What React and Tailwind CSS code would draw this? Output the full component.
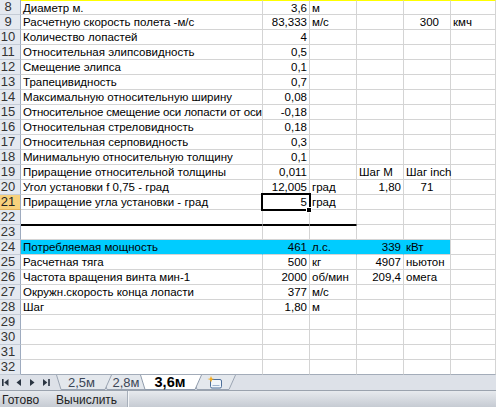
import React from "react";

const rows = [
  { n: 8, a: "Диаметр м.", b: "3,6", c: "м", top: true },
  { n: 9, a: "Расчетную скорость полета -м/с", b: "83,333", c: "м/с", e: "300", eAlign: "rp", f: "кмч" },
  { n: 10, a: "Количество лопастей", b: "4" },
  { n: 11, a: "Относительная элипсовидность", b: "0,5" },
  { n: 12, a: "Смещение элипса", b: "0,1" },
  { n: 13, a: "Трапецивидность", b: "0,7" },
  { n: 14, a: "Максимальную относительную ширину", b: "0,08" },
  { n: 15, a: "Относительное смещение оси лопасти от оси", b: "-0,18", tight: true },
  { n: 16, a: "Относительная стреловидность", b: "0,18" },
  { n: 17, a: "Относительная серповидность", b: "0,3" },
  { n: 18, a: "Минимальную относительную толщину", b: "0,1" },
  { n: 19, a: "Приращение относительной толщины", b: "0,011", d: "Шаг М", dAlign: "l", e: "Шаг inch", eAlign: "l", eOv: true },
  { n: 20, a: "Угол установки f 0,75 - град", b: "12,005", c: "град", d: "1,80", e: "71", eAlign: "c" },
  { n: 21, a: "Приращение угла установки - град", b: "5", c: "град", active: true },
  { n: 22, blackBottom: true },
  { n: 23, blackTop: true },
  { n: 24, a: "Потребляемая мощность", b: "461", c: "л.с.", d: "339", e: "кВт", eAlign: "l", cyan: true },
  { n: 25, a: "Расчетная тяга", b: "500", c: "кг", d: "4907", e: "ньютон", eAlign: "l" },
  { n: 26, a: "Частота вращения винта мин-1", b: "2000", c: "об/мин", d: "209,4", e: "омега", eAlign: "l" },
  { n: 27, a: "Окружн.скорость конца лопасти", b: "377", c: "м/с" },
  { n: 28, a: "Шаг", b: "1,80", c: "м" },
  { n: 29 },
  { n: 30 },
  { n: 31 },
  { n: 32, last: true },
];

function alignCls(al) {
  if (al === "r") return "justify-end pr-[2px]";
  if (al === "rp") return "justify-end pr-[11px]";
  if (al === "c") return "justify-center";
  return "justify-start pl-[2px]";
}

function Cell({ w, text, al, row, cyan, black, last, children, active, ov, tight }) {
  const cls = [
    "h-full box-border border-r border-b border-[#d4d4d4] whitespace-nowrap leading-[14px] flex items-center",
    active ? "relative" : ov ? "overflow-visible" : "overflow-hidden",
    w,
    alignCls(al),
    tight ? "tracking-[-0.15px]" : "",
    row.top ? "border-t border-t-[#ffff00]" : "",
    cyan ? "bg-[#00ccff]" : "",
    cyan === "mid" ? "border-r-[#00ccff]" : "",
    black && row.blackBottom ? "border-b-black" : "",
    black && row.blackTop ? "border-t border-t-black" : "",
    last ? "border-b-[#a3acb9]" : "",
  ].join(" ");
  return (
    <div className={cls}>
      {text}
      {children}
    </div>
  );
}

function Row({ row }) {
  const cy = row.cyan;
  return (
    <div className="flex h-[15px]">
      <div
        className={
          "h-full w-[21px] shrink-0 box-border border-r border-r-[#9eabbf] border-b flex items-center justify-center pr-[4px] text-[13px] leading-[14px] " +
          (row.active ? "bg-[#f7d17c] border-b-[#e3b35a] text-[#222]" : "bg-[#e4e9f0] border-b-[#c5ccd6] text-[#333]") +
          (row.last ? " border-b-[#a3acb9]" : "")
        }
      >
        {row.n}
      </div>
      <Cell w="w-[242px] shrink-0" text={row.a} al="l" row={row} cyan={cy ? "mid" : false} black last={row.last} tight={row.tight} />
      <Cell w="w-[47px] shrink-0" text={row.active ? null : row.b} al="r" row={row} cyan={cy ? "mid" : false} black last={row.last} active={row.active}>
        {row.active && (
          <>
            <span>{row.b}</span>
            <div className="absolute left-[-2px] top-[-2px] w-[50px] h-[18px] border-2 border-black z-10"></div>
            <div className="absolute left-[43px] top-[12px] w-[6px] h-[6px] bg-black border border-white z-20"></div>
          </>
        )}
      </Cell>
      <Cell w="w-[47px] shrink-0" text={row.c} al="l" row={row} cyan={cy ? "mid" : false} black last={row.last} />
      <Cell w="w-[47px] shrink-0" text={row.d} al={row.dAlign || "r"} row={row} cyan={cy ? "mid" : false} last={row.last} />
      <Cell w="w-[47px] shrink-0" text={row.e} al={row.eAlign || "l"} row={row} cyan={cy ? "end" : false} last={row.last} ov={row.eOv} />
      <Cell w="flex-1 min-w-0" text={row.f} al="l" row={row} last={row.last} />
    </div>
  );
}

function TabShape({ w, active }) {
  const fill = active ? "#ffffff" : "#e4e8ed";
  const stroke = active ? "#8e9aab" : "#9aa4b2";
  return (
    <svg className="absolute inset-0" width={w} height="15" viewBox={`0 0 ${w} 15`}>
      <polygon points={`0,0 ${w},0 ${w - 7},14.5 5,14.5`} fill={fill} />
      <polyline points={`0.5,0 5,14.5 ${w - 7},14.5 ${w - 0.5},0`} fill="none" stroke={stroke} strokeWidth="1" />
    </svg>
  );
}

function Tab({ w, z, ml, active, children, pad }) {
  return (
    <div className={"relative h-[15px] shrink-0 " + w.cls + " " + z + " " + ml}>
      <TabShape w={w.px} active={active} />
      <div className={"relative h-full flex items-center justify-center " + pad}>{children}</div>
    </div>
  );
}

export default function App() {
  return (
    <div className="w-[496px] h-[407px] overflow-hidden bg-white font-['Liberation_Sans',Arial,sans-serif] text-[11.5px] text-black flex flex-col">
      <div className="flex flex-col">
        {rows.map((r) => (
          <Row key={r.n} row={r} />
        ))}
      </div>
      <div className="h-[15px] flex bg-[#dde1e8]">
        <svg width="56" height="15" viewBox="0 0 56 15" className="shrink-0">
          <rect x="2" y="4" width="1.6" height="7" fill="#2b3542" />
          <polygon points="8.5,4 4.2,7.5 8.5,11" fill="#2b3542" />
          <polygon points="21,4 16.5,7.5 21,11" fill="#2b3542" />
          <polygon points="30,4 34.5,7.5 30,11" fill="#2b3542" />
          <polygon points="43,4 47.3,7.5 43,11" fill="#2b3542" />
          <rect x="48.2" y="4" width="1.6" height="7" fill="#2b3542" />
        </svg>
        <div className="flex">
          <Tab w={{ cls: "w-[56px]", px: 56 }} z="z-[3]" ml="" pad="pr-[5px]">
            <span className="text-[13px] text-[#3b4656] leading-none">2,5м</span>
          </Tab>
          <Tab w={{ cls: "w-[50px]", px: 50 }} z="z-[2]" ml="-ml-[10px]" pad="pr-[2px]">
            <span className="text-[13px] text-[#3b4656] leading-none">2,8м</span>
          </Tab>
          <Tab w={{ cls: "w-[62px]", px: 62 }} z="z-[4]" ml="-ml-[12px]" pad="pr-[2px]" active>
            <span className="text-[14.5px] font-bold text-black leading-none">3,6м</span>
          </Tab>
          <Tab w={{ cls: "w-[44px]", px: 44 }} z="z-[1]" ml="-ml-[10px]" pad="pl-[2px]">
            <svg width="16" height="13" viewBox="0 0 16 13">
              <rect x="3.5" y="3.5" width="11" height="8.5" rx="1.5" fill="#f2f6fb" stroke="#4d6f99" strokeWidth="1" />
              <line x1="5.5" y1="9.5" x2="12.5" y2="9.5" stroke="#9fb4cf" strokeWidth="1" />
              <polygon points="4,0 5,2.5 7.5,3 5,3.8 4,6.5 3,3.8 0.5,3 3,2.5" fill="#f5ab1b" />
            </svg>
          </Tab>
        </div>
      </div>
      <div className="h-[17px] flex items-center border-t border-[#9ba3ae] bg-gradient-to-b from-[#e7eaee] to-[#c6cbd3] text-[12px] text-[#222]">
        <span className="pl-[2px] pt-[2px]">Готово</span>
        <span className="pl-[17px] pt-[2px]">Вычислить</span>
        <div className="ml-[10px] h-full w-[2px] border-l border-[#a7afba] bg-[#f3f5f7]"></div>
      </div>
    </div>
  );
}
